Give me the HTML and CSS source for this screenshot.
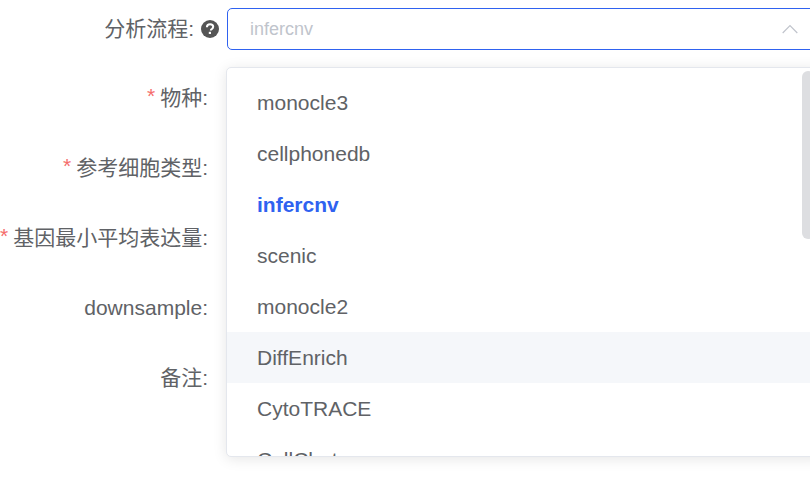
FILE: index.html
```html
<!DOCTYPE html>
<html lang="zh">
<head>
    <meta charset="UTF-8">
    <meta name="viewport" content="width=device-width, initial-scale=1.0">
    <title>分析流程</title>
    <link rel="stylesheet" href="styles.css">
</head>
<body>
    <form class="task-form">
        <div class="form-row">
            <label class="form-label flow-label">分析流程:
                <svg class="help-icon" width="18" height="18" viewBox="0 0 18 18">
                    <circle cx="9" cy="9" r="9" fill="#555"/>
                    <path d="M5.9 7.2c0-1.9 1.3-3 3.2-3 1.8 0 3.1 1 3.1 2.6 0 1.2-.7 1.8-1.5 2.3-.7.4-.9.8-.9 1.5" fill="none" stroke="#fff" stroke-width="2"/>
                    <rect x="7.8" y="11.8" width="2.2" height="2.2" fill="#fff"/>
                </svg>
            </label>
            <div class="select-box">
                <span class="select-value">infercnv</span>
                <svg class="select-arrow" width="16" height="10" viewBox="0 0 16 10">
                    <path d="M0.7 9 8 1.6 15.3 9" fill="none" stroke="#c0c4cc" stroke-width="1.2"/>
                </svg>
            </div>
        </div>
        <div class="form-row"><label class="form-label"><span class="required">*</span> 物种:</label></div>
        <div class="form-row"><label class="form-label"><span class="required">*</span> 参考细胞类型:</label></div>
        <div class="form-row"><label class="form-label"><span class="required">*</span> 基因最小平均表达量:</label></div>
        <div class="form-row"><label class="form-label latin-label">downsample:</label></div>
        <div class="form-row"><label class="form-label">备注:</label></div>

        <div class="dropdown">
            <ul class="option-list">
                <li>monocle3</li>
                <li>cellphonedb</li>
                <li class="selected">infercnv</li>
                <li>scenic</li>
                <li>monocle2</li>
                <li class="hover">DiffEnrich</li>
                <li>CytoTRACE</li>
                <li>CellChat</li>
            </ul>
            <div class="scroll-thumb"></div>
        </div>
    </form>
</body>
</html>
```

FILE: styles.css
```css
html, body {
    height: 100%;
}

body {
    margin: 0;
    overflow: hidden;
    background: #fff;
    color: #606266;
    font-family: "Liberation Sans", "Noto Sans CJK SC", sans-serif;
    font-size: 21px;
}

.task-form {
    position: relative;
    padding-top: 8px;
}

.form-row {
    display: flex;
    align-items: center;
    height: 42px;
    margin-bottom: 28px;
}

.form-label {
    display: flex;
    align-items: center;
    justify-content: flex-end;
    flex: none;
    gap: 5px;
    width: 208px;
    padding-bottom: 7px;
    white-space: nowrap;
}

.flow-label {
    gap: 7px;
    width: 219px;
    margin-right: 8px;
    padding-bottom: 4px;
}

.latin-label {
    padding-bottom: 3px;
}

.required {
    color: #f56c6c;
}

.help-icon {
    flex: none;
    margin-top: 3px;
}

.select-box {
    display: flex;
    align-items: center;
    justify-content: space-between;
    flex: none;
    box-sizing: border-box;
    width: 600px;
    height: 42px;
    padding: 0 28px 0 22px;
    border: 1px solid #2f62f0;
    border-radius: 5px;
    color: #c0c4cc;
    font-size: 18px;
}

.dropdown {
    position: absolute;
    top: 67px;
    left: 226px;
    box-sizing: border-box;
    width: 600px;
    height: 390px;
    overflow: hidden;
    border: 1px solid #e4e7ed;
    border-radius: 5px;
    background: #fff;
    box-shadow: 0 2px 14px rgba(0, 0, 0, 0.1);
}

.option-list {
    margin: 0;
    padding: 9px 0 0;
    list-style: none;
}

.option-list li {
    height: 51px;
    padding: 0 30px;
    line-height: 51px;
}

.option-list .selected {
    color: #2f62f0;
    font-weight: bold;
}

.option-list .hover {
    background: #f5f7fa;
}

.scroll-thumb {
    position: absolute;
    top: 3px;
    left: 575px;
    width: 12px;
    height: 168px;
    border-radius: 6px;
    background: #dddee1;
}
```
